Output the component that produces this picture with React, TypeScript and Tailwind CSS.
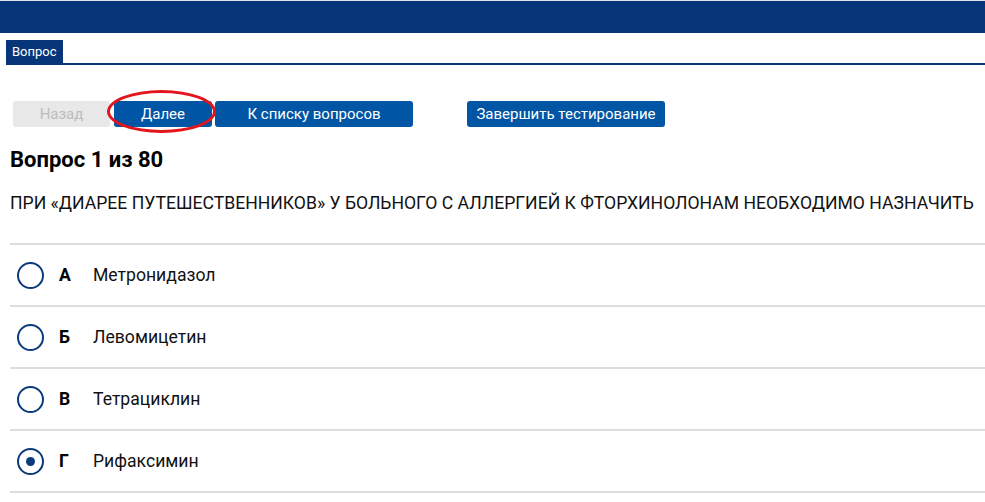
const answers = [
  { letter: 'А', text: 'Метронидазол' },
  { letter: 'Б', text: 'Левомицетин' },
  { letter: 'В', text: 'Тетрациклин' },
  { letter: 'Г', text: 'Рифаксимин', checked: true },
]

function Radio({ checked }: { checked?: boolean }) {
  return (
    <span className="flex items-center justify-center w-[27px] h-[27px] rounded-full border-[2.5px] border-[#0b3a7c] shrink-0">
      {checked && <span className="w-[9px] h-[9px] rounded-full bg-[#0b3a7c]" />}
    </span>
  )
}

export default function App() {
  return (
    <div className="w-[985px] h-[502px] overflow-hidden bg-white font-['Roboto',sans-serif] text-black">
      {/* Top bar */}
      <div className="h-[1px] bg-[#dfe3ea]" />
      <div className="h-[32px] bg-[#06357a]" />

      {/* Tabs */}
      <div className="pt-[7px] pl-[6px]">
        <div className="border-b-2 border-[#06357a] leading-none">
          <span className="inline-flex items-center h-[23px] px-[6px] bg-[#06357a] text-white text-[13px]">Вопрос</span>
        </div>
      </div>

      <div className="pl-[10px]">
        {/* Buttons */}
        <div className="flex items-center mt-[36px] h-[26px]">
          <button className="ml-[3px] w-[97px] h-[26px] rounded-[3px] bg-[#e8e8e8] text-[#bdbdbd] text-[15px]">Назад</button>
          <div className="relative ml-[4px]">
            <button className="w-[98px] h-[26px] rounded-[3px] bg-[#0055a5] text-white text-[15px]">Далее</button>
            <div className="absolute left-[-7px] top-[-11px] w-[109px] h-[43px] rounded-[50%] border-[3.5px] border-[#e3141c] pointer-events-none" />
          </div>
          <button className="ml-[3px] w-[198px] h-[26px] rounded-[3px] bg-[#0055a5] text-white text-[15px]">К списку вопросов</button>
          <button className="ml-[54px] w-[198px] h-[26px] rounded-[3px] bg-[#0055a5] text-white text-[15px]">Завершить тестирование</button>
        </div>

        <h1 className="mt-[20px] text-[22px] font-bold leading-[26px]">Вопрос 1 из 80</h1>
        <p className="mt-[18px] text-[17.6px] leading-[24px] text-[#111] whitespace-nowrap">
          ПРИ «ДИАРЕЕ ПУТЕШЕСТВЕННИКОВ» У БОЛЬНОГО С АЛЛЕРГИЕЙ К ФТОРХИНОЛОНАМ НЕОБХОДИМО НАЗНАЧИТЬ
        </p>

        <div className="mt-[28px] border-t-2 border-[#dddddd]">
          {answers.map((a) => (
            <div key={a.letter} className="flex items-center h-[62px] border-b-2 border-[#dddddd]">
              <span className="ml-[7px]"><Radio checked={a.checked} /></span>
              <span className="ml-[15px] w-[34px] text-[17.6px] font-bold">{a.letter}</span>
              <span className="text-[17.6px] text-[#111]">{a.text}</span>
            </div>
          ))}
        </div>
      </div>
    </div>
  )
}
